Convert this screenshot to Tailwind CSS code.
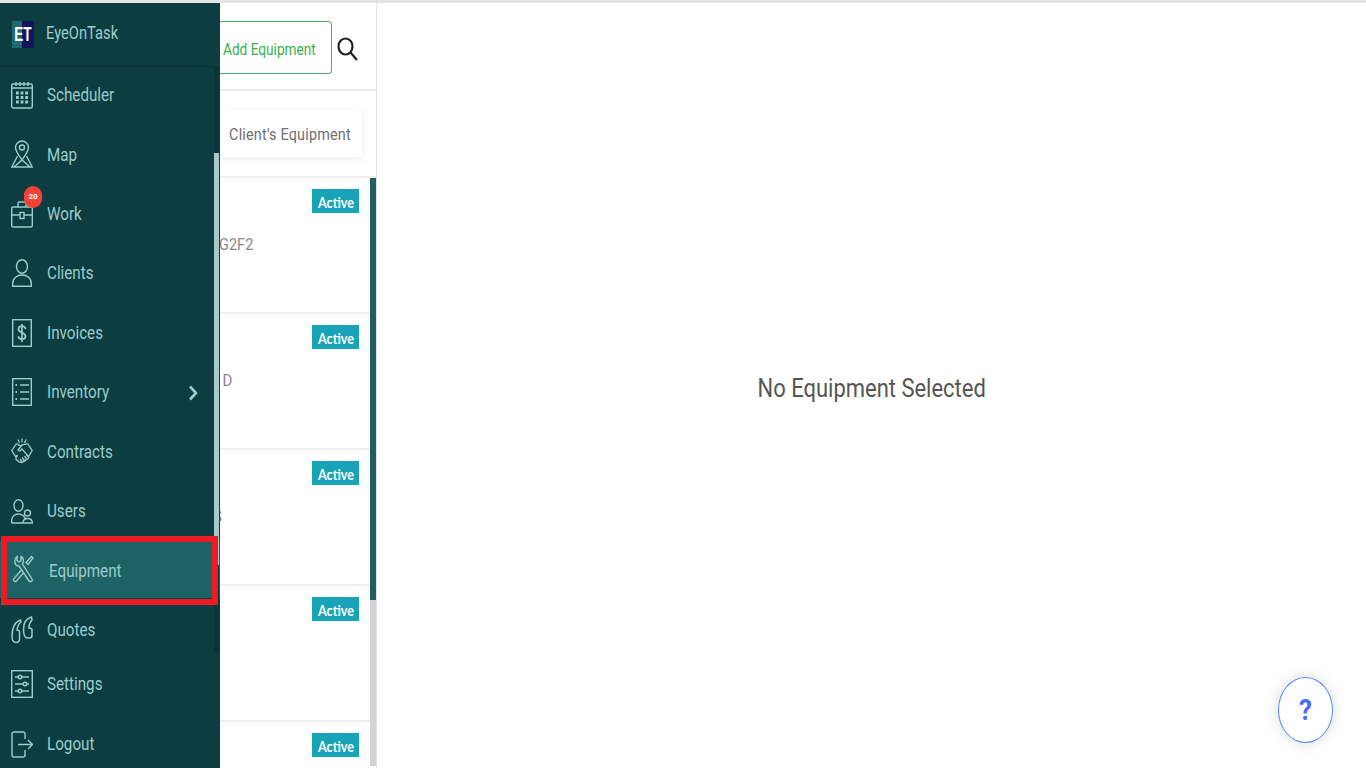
<!DOCTYPE html>
<html lang="en">
<head>
  <meta charset="UTF-8">
  <title>Equipment</title>
  <script src="https://cdn.jsdelivr.net/npm/@tailwindcss/browser@4"></script>
</head>
<body class="bg-white font-['Roboto',sans-serif] overflow-hidden">
  <div class="h-[768px] w-[1366px] flex flex-col overflow-hidden">
    <div class="h-[3px] bg-[#e4e4e4] shrink-0"></div>
    <div class="flex flex-1 min-h-0">

      <!-- Sidebar -->
      <aside class="relative w-[220px] shrink-0 bg-[#0b3d41] text-[#9ccccc] text-[16px]">
        <div class="h-[64px] flex items-center pl-[12px] gap-[12px] border-b border-[#093438]">
          <div class="w-[22px] h-[27px] flex items-center justify-center bg-[linear-gradient(90deg,#1f6a6c_45%,#14145e_45%)] text-white font-bold text-[17px] font-['Liberation_Sans',sans-serif]"><span class="inline-block scale-x-[0.8] scale-y-[1.2]">ET</span></div>
          <span class="inline-block origin-left scale-x-[0.92] scale-y-[1.2] -mt-[3px]">EyeOnTask</span>
        </div>

        <nav class="flex flex-col -mt-[2px]">
          <a class="h-[59.5px] flex items-center pl-[11px]">
            <svg class="w-[22px] h-[28px]" viewBox="0 0 22 28" fill="none" stroke="currentColor" stroke-width="1.4"><rect x="0.700" y="3" width="20.600" height="24" rx="1.500"/><path d="M5 1v4M9 1v4M13 1v4M17 1v4M0.700 7h20.600"/><path d="M5 12h12M5 16.500h12M5 21h12" stroke-width="3" stroke-dasharray="2.800 1.800"/></svg>
            <span class="ml-[14px] inline-block origin-left scale-x-[0.95] scale-y-[1.2]">Scheduler</span>
          </a>
          <a class="h-[59.5px] flex items-center pl-[11px]">
            <svg class="w-[22px] h-[28px]" viewBox="0 0 22 28" fill="none" stroke="currentColor" stroke-width="1.4"><path d="M11 20C8 15 4.500 11.500 4.500 7.500a6.500 6.500 0 0 1 13 0C17.500 11.500 14 15 11 20z"/><circle cx="11" cy="7.500" r="2.500"/><path d="M6.500 16L0.800 27h20.400L15.500 16M3 27l8-7 8 7"/></svg>
            <span class="ml-[14px] mt-[1px] inline-block origin-left scale-x-[0.95] scale-y-[1.2]">Map</span>
          </a>
          <a class="relative h-[59.5px] flex items-center pl-[11px]">
            <svg class="w-[22px] h-[28px]" viewBox="0 0 22 28" fill="none" stroke="currentColor" stroke-width="1.400"><rect x="0.700" y="7" width="20.600" height="20" rx="1.500"/><path d="M7 7V3.500A1.500 1.500 0 0 1 8.500 2h5A1.500 1.500 0 0 1 15 3.500V7M0.700 15h8M13 15h8.300"/><rect x="9" y="12.500" width="4" height="6"/></svg>
            <span class="ml-[14px] inline-block origin-left scale-x-[0.95] scale-y-[1.2]">Work</span>
            <span class="absolute left-[24px] top-[2px] w-[18px] h-[22px] rounded-full bg-[#f44336] text-white text-[8px] font-bold flex items-center justify-center">20</span>
          </a>
          <a class="h-[59.5px] flex items-center pl-[12px]">
            <svg class="w-[20px] h-[28px]" viewBox="0 0 20 28" fill="none" stroke="currentColor" stroke-width="1.400"><ellipse cx="10" cy="7.500" rx="5.500" ry="6.800"/><path d="M0.700 27.300v-2.800C0.700 19 5 16 10 16s9.300 3 9.300 8.500v2.800z"/></svg>
            <span class="ml-[15px] inline-block origin-left scale-x-[0.95] scale-y-[1.2]">Clients</span>
          </a>
          <a class="h-[59.5px] flex items-center pl-[12px]">
            <svg class="w-[20px] h-[28px]" viewBox="0 0 20 28" fill="none" stroke="currentColor" stroke-width="1.400"><rect x="0.700" y="0.700" width="18.600" height="26.600"/><path d="M13.500 10c0-1.800-1.500-2.800-3.500-2.800S6.500 8.300 6.500 10.200c0 4 7 2.800 7 7 0 2-1.500 3-3.500 3s-3.500-1-3.500-2.900M10 5v18" stroke-width="1.700"/></svg>
            <span class="ml-[15px] inline-block origin-left scale-x-[0.95] scale-y-[1.2]">Invoices</span>
          </a>
          <a class="relative h-[59.5px] flex items-center pl-[12px]">
            <svg class="w-[20px] h-[28px]" viewBox="0 0 20 28" fill="none" stroke="currentColor" stroke-width="1.400"><rect x="0.700" y="0.700" width="18.600" height="26.600"/><path d="M8 7h9M8 14h9M8 21h9"/><path d="M3.500 7h1.500M3.500 14h1.500M3.500 21h1.500" stroke-width="1.800"/></svg>
            <span class="ml-[15px] inline-block origin-left scale-x-[0.95] scale-y-[1.2]">Inventory</span>
            <svg class="absolute left-[188px] top-[22px] w-[10px] h-[16px]" viewBox="0 0 10 16" fill="none" stroke="currentColor" stroke-width="2.600"><path d="M2 1.500L8 8l-6 6.500"/></svg>
          </a>
          <a class="h-[59.5px] flex items-center pl-[11px]">
            <svg class="w-[22px] h-[28px]" viewBox="0 0 22 28" fill="none" stroke="currentColor" stroke-width="1.300"><path d="M11 0.500v4M7 1.500l1.500 3.500M15 1.500L13.500 5"/><path d="M5.500 5.500L0.800 12.500l3.700 6 2-1.500M16.500 5.500l4.700 7-3.700 6-2-1.500"/><path d="M5.500 5.500c2 2 4 2.500 5.500 1.500s3.500 0 5.500-1.500M11 7l-4 5c1 1.500 2.500 1 4-1l6.500 7.500c.5 2-1 3-2.500 2.500 0 2-1.500 2.500-2.500 2 -.5 1.500-2 2-3 1-1 .5-2.500 0-2.500-1.500-1.500 0-2.500-1-2-3l1.500-2"/><path d="M9 21l2.500 3M11 19.500l3 3.500M13.500 18l2 2.500"/></svg>
            <span class="ml-[14px] inline-block origin-left scale-x-[0.95] scale-y-[1.2]">Contracts</span>
          </a>
          <a class="h-[59.5px] flex items-center pl-[11px]">
            <svg class="w-[22px] h-[25px]" viewBox="0 0 22 25" fill="none" stroke="currentColor" stroke-width="1.400"><ellipse cx="7.500" cy="6.500" rx="4.500" ry="5.800"/><path d="M0.700 24v-2c0-4.500 3-7 6.800-7s6 2 7 5.500M0.700 24h11"/><circle cx="16.500" cy="14" r="3"/><path d="M12 24c0-3 2-4.500 4.500-4.500S21.300 21 21.300 24z"/></svg>
            <span class="ml-[14px] inline-block origin-left scale-x-[0.95] scale-y-[1.2]">Users</span>
          </a>
          <a class="h-[59.5px] flex items-center pl-[12px] bg-[#1d6365] shadow-[inset_0_-3px_0_#0b3d41]">
            <svg class="w-[22px] h-[28px] -mt-[3px]" viewBox="0 0 22 28" fill="none" stroke="currentColor" stroke-width="1.400"><path d="M5 1.500v4l2 1.500 2-1.500v-4c2.500 1 3 5 1.500 7.500L20 24c1 2-1.500 3.500-3 2L7 11C3 11.500 1 5 5 1.500z"/><path d="M19.500 1.500l1.500 1.500-5 6.500-2-2zM9 15.500L1.500 24c-.5 1.500 1 3 2.500 2.500l7.500-8.500"/></svg>
            <span class="ml-[15px] inline-block origin-left scale-x-[0.95] scale-y-[1.2]">Equipment</span>
          </a>
          <a class="h-[59.5px] flex items-center pl-[11px]">
            <svg class="w-[22px] h-[28px]" viewBox="0 0 22 28" fill="none" stroke="currentColor" stroke-width="1.500"><path d="M9.500 4C4 6 1 12 1 20c0 4 1.500 6.500 4 6.500 2 0 3.500-1.500 3.500-4V16c0-1.500-1-2-2.500-2 .5-3.500 2-6.500 4-8z"/><path d="M20.500 1c-5 1.500-8 6-8 12 0 5 1 9 4 9h2c1.500 0 2.500-1 2.500-2.500V14c0-1.500-1-2-3-2 0-3 1-6 3-8z"/></svg>
            <span class="ml-[14px] inline-block origin-left scale-x-[0.95] scale-y-[1.2]">Quotes</span>
          </a>
          <a class="h-[48.5px] flex items-center pl-[11px]">
            <svg class="w-[22px] h-[28px] shrink-0" viewBox="0 0 22 28" fill="none" stroke="currentColor" stroke-width="1.400"><rect x="0.700" y="0.700" width="20.600" height="26.600"/><path d="M4 7h3M11 7h7M4 14h8M16 14h2M4 21h3M11 21h7"/><circle cx="9" cy="7" r="1.800"/><circle cx="14" cy="14" r="1.800"/><circle cx="9" cy="21" r="1.800"/></svg>
            <span class="ml-[14px] inline-block origin-left scale-x-[0.95] scale-y-[1.2]">Settings</span>
          </a>
          <a class="h-[71.5px] flex items-center pl-[11px]">
            <svg class="w-[22px] h-[27px]" viewBox="0 0 22 27" fill="none" stroke="currentColor" stroke-width="1.400"><path d="M14 8V3a2 2 0 0 0-2-2H3a2 2 0 0 0-2 2v21a2 2 0 0 0 2 2h9a2 2 0 0 0 2-2v-5M7 13.500h14M17 9l4.500 4.500L17 18"/></svg>
            <span class="ml-[14px] inline-block origin-left scale-x-[0.95] scale-y-[1.2]">Logout</span>
          </a>
        </nav>

        <!-- sidebar scrollbar -->
        <div class="absolute left-[214px] top-[64px] w-[5px] h-[585px] bg-[#093438]">
          <div class="mt-[86px] h-[412px] bg-[#a9c8c8]"></div>
        </div>
        <!-- red highlight round the Equipment row -->
        <div class="absolute left-[1px] top-[533px] w-[217px] h-[69px] border-[6px] border-[#ed1c24]"></div>
      </aside>

      <!-- Equipment list -->
      <section class="w-[157px] shrink-0 border-r border-[#e4e4e4] flex flex-col overflow-hidden">
        <div class="h-[88px] shrink-0 border-b-2 border-[#eeeeee] flex items-center">
          <div class="w-[112px] h-[53px] mt-[3px] rounded-r-[4px] border border-l-0 border-[#4caf60] flex items-center pl-[3px] text-[#37b24d] text-[15px] whitespace-nowrap">
            <span class="inline-block mt-[4px] origin-left scale-x-[0.91] scale-y-[1.15]">Add Equipment</span>
          </div>
          <svg class="ml-[5px] mt-[5px] w-[21px] h-[24px]" viewBox="0 0 21 24" fill="none" stroke="#222" stroke-width="2.200"><ellipse cx="8.500" cy="9.500" rx="7" ry="8"/><path d="M13.500 15.500L20 23"/></svg>
        </div>
        <div class="h-[87px] shrink-0 border-b-2 border-[#eeeeee] flex items-start pt-[19px]">
          <div class="w-[142px] h-[47px] rounded-r-[3px] bg-white shadow-[0_2px_8px_rgba(0,0,0,0.08)] flex items-center justify-end pr-[11px] text-[#707070] text-[15px] tracking-[0.2px] whitespace-nowrap">
            <span class="inline-block mt-[2px] origin-right scale-x-[0.96] scale-y-[1.15]">Client's Equipment</span>
          </div>
        </div>
        <div class="flex flex-1 min-h-0">
          <div class="flex-1 min-w-0 overflow-hidden text-[#888] text-[15px]">
            <div class="h-[136px] border-b-2 border-[#eeeeee] relative">
              <span class="absolute right-[11px] top-[11px] w-[47px] h-[24px] bg-[#17a2b8] text-white text-[14px] font-bold flex items-center justify-center font-['Lato',sans-serif]"><span class="inline-block scale-x-[0.9] scale-y-[1.1]">Active</span></span>
              <span class="absolute left-[-1px] top-[55px] inline-block origin-left scale-x-[0.97] scale-y-[1.15]">G2F2</span>
            </div>
            <div class="h-[136px] border-b-2 border-[#eeeeee] relative">
              <span class="absolute right-[11px] top-[11px] w-[47px] h-[24px] bg-[#17a2b8] text-white text-[14px] font-bold flex items-center justify-center font-['Lato',sans-serif]"><span class="inline-block scale-x-[0.9] scale-y-[1.1]">Active</span></span>
              <span class="absolute left-[-6px] top-[55px] inline-block scale-y-[1.15]">1D</span>
            </div>
            <div class="h-[136px] border-b-2 border-[#eeeeee] relative">
              <span class="absolute right-[11px] top-[11px] w-[47px] h-[24px] bg-[#17a2b8] text-white text-[14px] font-bold flex items-center justify-center font-['Lato',sans-serif]"><span class="inline-block scale-x-[0.9] scale-y-[1.1]">Active</span></span>
              <span class="absolute left-[-7px] top-[55px] inline-block scale-y-[1.15]">S</span>
            </div>
            <div class="h-[136px] border-b-2 border-[#eeeeee] relative">
              <span class="absolute right-[11px] top-[11px] w-[47px] h-[24px] bg-[#17a2b8] text-white text-[14px] font-bold flex items-center justify-center font-['Lato',sans-serif]"><span class="inline-block scale-x-[0.9] scale-y-[1.1]">Active</span></span>
            </div>
            <div class="h-[136px] relative">
              <span class="absolute right-[11px] top-[11px] w-[47px] h-[24px] bg-[#17a2b8] text-white text-[14px] font-bold flex items-center justify-center font-['Lato',sans-serif]"><span class="inline-block scale-x-[0.9] scale-y-[1.1]">Active</span></span>
            </div>
          </div>
          <div class="w-[6px] h-[588px] bg-[#d4d4d4] shrink-0">
            <div class="h-[422px] bg-[#1f5f60]"></div>
          </div>
        </div>
      </section>

      <!-- Detail panel -->
      <main class="relative flex-1 flex justify-center pt-[367px]">
        <p class="h-[36px] text-[24px] text-[#555] inline-block scale-x-[0.915] scale-y-[1.1]">No Equipment Selected</p>
        <button class="absolute left-[901px] top-[674px] w-[55px] h-[66px] rounded-[50%] bg-white border border-[#4d8ef7] shadow-[0_0_14px_rgba(0,0,0,0.15)] text-[#4a6cf7] text-[26px] font-bold"><span class="inline-block scale-y-[1.1]">?</span></button>
      </main>
    </div>
  </div>
</body>
</html>
